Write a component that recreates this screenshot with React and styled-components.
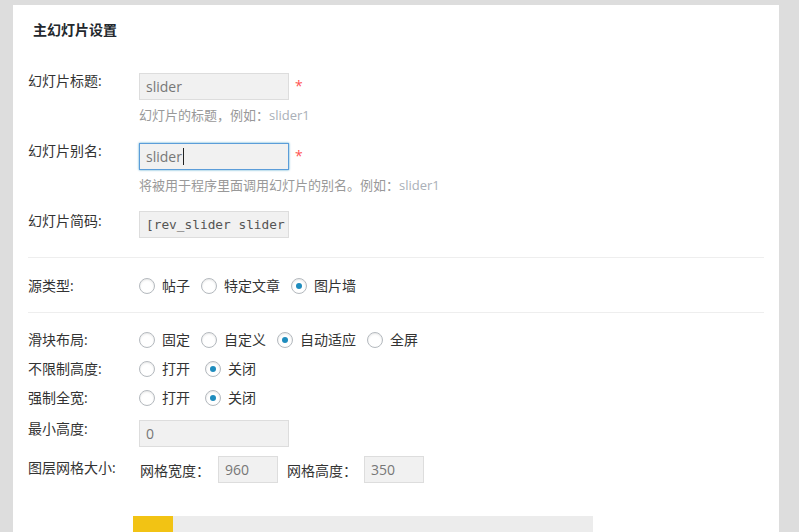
import React from "react";
import styled, { createGlobalStyle, css } from "styled-components";

const GlobalStyle = createGlobalStyle`
  html, body {
    margin: 0;
    padding: 0;
    background: #dddddd;
    height: 100%;
    overflow: hidden;
  }
  body {
    font-family: "Open Sans", "Noto Sans CJK SC", sans-serif;
    font-size: 14px;
    color: #333;
  }
`;

const Panel = styled.div`
  margin: 5px 20px 0 13px;
  background: #fff;
  padding: 15px 15px 0;
  min-height: 527px;
  box-sizing: border-box;
`;

const Title = styled.h3`
  margin: 0 0 0 5px;
  font-size: 14px;
  line-height: 20px;
  font-weight: bold;
  color: #23282d;
`;

const Row = styled.div`
  display: flex;
  align-items: flex-start;
  margin-top: ${(p) => p.$top || 0}px;
`;

const Label = styled.div`
  width: 111px;
  flex-shrink: 0;
  line-height: 16px;
  padding-top: ${(p) => p.$offset || 0}px;
  color: #333;
  white-space: nowrap;
`;

const Field = styled.div`
  display: flex;
  flex-direction: column;
`;

const Inline = styled.div`
  display: flex;
  align-items: center;
`;

const InputBox = styled.div`
  box-sizing: border-box;
  width: ${(p) => p.$width || 150}px;
  height: 27px;
  padding: 0 6px;
  display: flex;
  align-items: center;
  background: #f1f1f1;
  border: 1px solid #dddddd;
  color: #777;
  font-size: 14px;
  white-space: nowrap;
  overflow: hidden;
  ${(p) =>
    p.$focus &&
    css`
      border-color: #5b9dd9;
      box-shadow: 0 0 2px rgba(30, 140, 190, 0.8);
    `}
  ${(p) =>
    p.$mono &&
    css`
      font-family: "DejaVu Sans Mono", "Liberation Mono", monospace;
      font-size: 12.8px;
      color: #555;
    `}
`;

const Caret = styled.span`
  display: inline-block;
  width: 1px;
  height: 17px;
  background: #222;
  margin-left: 1px;
`;

const Required = styled.span`
  color: #f55;
  margin-left: 6px;
  font-size: 14px;
  line-height: 14px;
  align-self: flex-start;
  margin-top: 6px;
`;

const Help = styled.div`
  margin-top: 6px;
  font-size: 13px;
  line-height: 18px;
  color: #999;
  white-space: nowrap;

  em {
    font-style: normal;
    color: #aab0b8;
  }
`;

const Divider = styled.hr`
  border: 0;
  border-top: 1px solid #eeeeee;
  margin: ${(p) => p.$top}px 0 0;
  height: 0;
`;

const Options = styled.div`
  display: flex;
  align-items: center;
  height: 16px;
`;

const Option = styled.label`
  display: inline-flex;
  align-items: center;
  margin-right: ${(p) => p.$gap || 11}px;
  line-height: 16px;
  color: #333;
  white-space: nowrap;
`;

const Circle = styled.span`
  box-sizing: border-box;
  width: 16px;
  height: 16px;
  border-radius: 50%;
  border: 1px solid #b4b9be;
  background: #fff;
  box-shadow: inset 0 1px 2px rgba(0, 0, 0, 0.1);
  margin-right: 7px;
  display: inline-flex;
  align-items: center;
  justify-content: center;

  &::after {
    content: "";
    width: 6px;
    height: 6px;
    border-radius: 50%;
    background: ${(p) => (p.$checked ? "#1e8cbe" : "transparent")};
  }
`;

const SubLabel = styled.span`
  margin: 0 ${(p) => p.$gap || 8}px 0 ${(p) => p.$left || 1}px;
  color: #333;
  white-space: nowrap;
`;

const ProgressBar = styled.div`
  margin: 33px 0 0 105px;
  width: 460px;
  height: 20px;
  background: #ececec;
  display: flex;
`;

const ProgressFill = styled.div`
  width: 40px;
  background: #f2c314;
`;

const RadioGroup = ({ items, checked, gap }) => (
  <Options>
    {items.map((item) => (
      <Option key={item} $gap={gap}>
        <Circle $checked={item === checked} />
        {item}
      </Option>
    ))}
  </Options>
);

const App = () => {
  return (
    <>
      <GlobalStyle />
      <Panel>
        <Title>主幻灯片设置</Title>

        <Row $top={33}>
          <Label>幻灯片标题:</Label>
          <Field>
            <Inline>
              <InputBox>slider</InputBox>
              <Required>*</Required>
            </Inline>
            <Help>
              幻灯片的标题，例如：<em>slider1</em>
            </Help>
          </Field>
        </Row>

        <Row $top={19}>
          <Label>幻灯片别名:</Label>
          <Field>
            <Inline>
              <InputBox $focus>
                slider
                <Caret />
              </InputBox>
              <Required>*</Required>
            </Inline>
            <Help>
              将被用于程序里面调用幻灯片的别名。例如：<em>slider1</em>
            </Help>
          </Field>
        </Row>

        <Row $top={17}>
          <Label $offset={2}>幻灯片简码:</Label>
          <InputBox $mono>[rev_slider slider</InputBox>
        </Row>

        <Divider $top={19} />

        <Row $top={20}>
          <Label>源类型:</Label>
          <RadioGroup items={["帖子", "特定文章", "图片墙"]} checked="图片墙" />
        </Row>

        <Divider $top={18} />

        <Row $top={19}>
          <Label>滑块布局:</Label>
          <RadioGroup
            items={["固定", "自定义", "自动适应", "全屏"]}
            checked="自动适应"
          />
        </Row>
        <Row $top={13}>
          <Label>不限制高度:</Label>
          <RadioGroup items={["打开", "关闭"]} checked="关闭" gap={15} />
        </Row>
        <Row $top={13}>
          <Label>强制全宽:</Label>
          <RadioGroup items={["打开", "关闭"]} checked="关闭" gap={15} />
        </Row>

        <Row $top={14}>
          <Label $offset={1}>最小高度:</Label>
          <InputBox>0</InputBox>
        </Row>

        <Row $top={9}>
          <Label $offset={4}>图层网格大小:</Label>
          <Inline>
            <SubLabel>网格宽度：</SubLabel>
            <InputBox $width={60}>960</InputBox>
            <SubLabel $left={9} $gap={7}>
              网格高度：
            </SubLabel>
            <InputBox $width={60}>350</InputBox>
          </Inline>
        </Row>

        <ProgressBar>
          <ProgressFill />
        </ProgressBar>
      </Panel>
    </>
  );
};

export default App;
